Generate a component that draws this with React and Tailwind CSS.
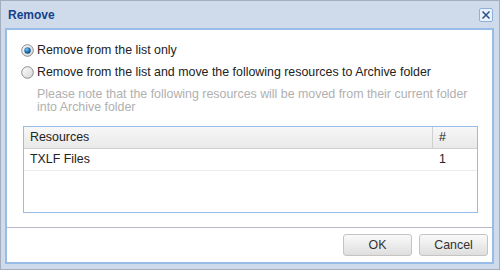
import React from "react";

function Radio({ checked }) {
  return (
    <svg width="13" height="13" viewBox="0 0 13 13" className="shrink-0">
      <defs>
        <linearGradient id={checked ? "rg1" : "rg0"} x1="0" y1="0" x2="1" y2="1">
          <stop offset="0" stopColor="#ffffff" />
          <stop offset="1" stopColor="#d4d4d4" />
        </linearGradient>
        <radialGradient id="dot" cx="0.4" cy="0.35" r="0.7">
          <stop offset="0" stopColor="#7fc8f5" />
          <stop offset="0.6" stopColor="#176fb6" />
          <stop offset="1" stopColor="#0a416f" />
        </radialGradient>
      </defs>
      <circle cx="6.5" cy="6.5" r="5.8" fill={`url(#${checked ? "rg1" : "rg0"})`} stroke="#8a8a8a" strokeWidth="1" />
      {checked && <circle cx="6.5" cy="6.5" r="3.2" fill="url(#dot)" />}
    </svg>
  );
}

function Button({ children }) {
  return (
    <button className="h-[22px] w-[69px] rounded-[3px] border border-[#c4c4c4] bg-gradient-to-b from-[#fafafa] to-[#dedede] text-[12.4px] text-[#333]">
      {children}
    </button>
  );
}

export default function App() {
  return (
    <div
      className="flex h-[270px] w-[500px] flex-col border border-[#a3afbf] bg-[#cfdbea] pb-[5px] pl-[4px] pr-[5px] text-[12.4px] text-[#222]"
      style={{ fontFamily: '"Liberation Sans", Arial, sans-serif' }}
    >
      {/* title bar */}
      <div className="flex h-[27px] items-center justify-between pl-[3px] pr-[1px]">
        <span className="text-[12px] font-bold text-[#15428b]">Remove</span>
        <div className="mt-[1px] flex h-[14px] w-[14px] items-center justify-center rounded-[2px] border border-[#8fb0dc] bg-[#eaf1fb]">
          <svg width="10" height="10" viewBox="0 0 10 10">
            <path d="M1.5 1.5 L8.5 8.5 M8.5 1.5 L1.5 8.5" stroke="#2b4f86" strokeWidth="1.5" />
          </svg>
        </div>
      </div>

      {/* body */}
      <div className="flex flex-1 flex-col border-2 border-[#99bbe8] bg-white">
        <div className="flex flex-1 flex-col pt-[9px]">
          <label className="flex h-[22px] items-center gap-[3px] pl-[14px]">
            <Radio checked />
            <span>Remove from the list only</span>
          </label>
          <label className="flex h-[22px] items-center gap-[3px] pl-[14px]">
            <Radio />
            <span>Remove from the list and move the following resources to Archive folder</span>
          </label>
          <p className="mt-[5px] pl-[30px] leading-[13px] text-[#b0b0b0]">
            Please note that the following resources will be moved from their current folder
            <br />
            into Archive folder
          </p>

          <div className="ml-[16px] mr-[14px] mt-[12px] h-[87px] border border-[#99bbe8]">
            <div className="flex h-[22px] border-b border-[#d0d0d0] bg-gradient-to-b from-[#f7f7f7] to-[#e9e9e9]">
              <div className="flex flex-1 items-center pl-[6px]">Resources</div>
              <div className="flex w-[45px] items-center border-l border-[#d0d0d0] pl-[6px]">#</div>
            </div>
            <div className="flex h-[22px] border-b border-[#ededed]">
              <div className="flex flex-1 items-center pl-[6px]">TXLF Files</div>
              <div className="flex w-[45px] items-center pl-[7px]">1</div>
            </div>
          </div>
        </div>

        {/* footer */}
        <div className="flex h-[35px] items-start justify-end gap-[7px] border-t border-[#b5b8c8] pr-[4px] pt-[6px]">
          <Button>OK</Button>
          <Button>Cancel</Button>
        </div>
      </div>
    </div>
  );
}
